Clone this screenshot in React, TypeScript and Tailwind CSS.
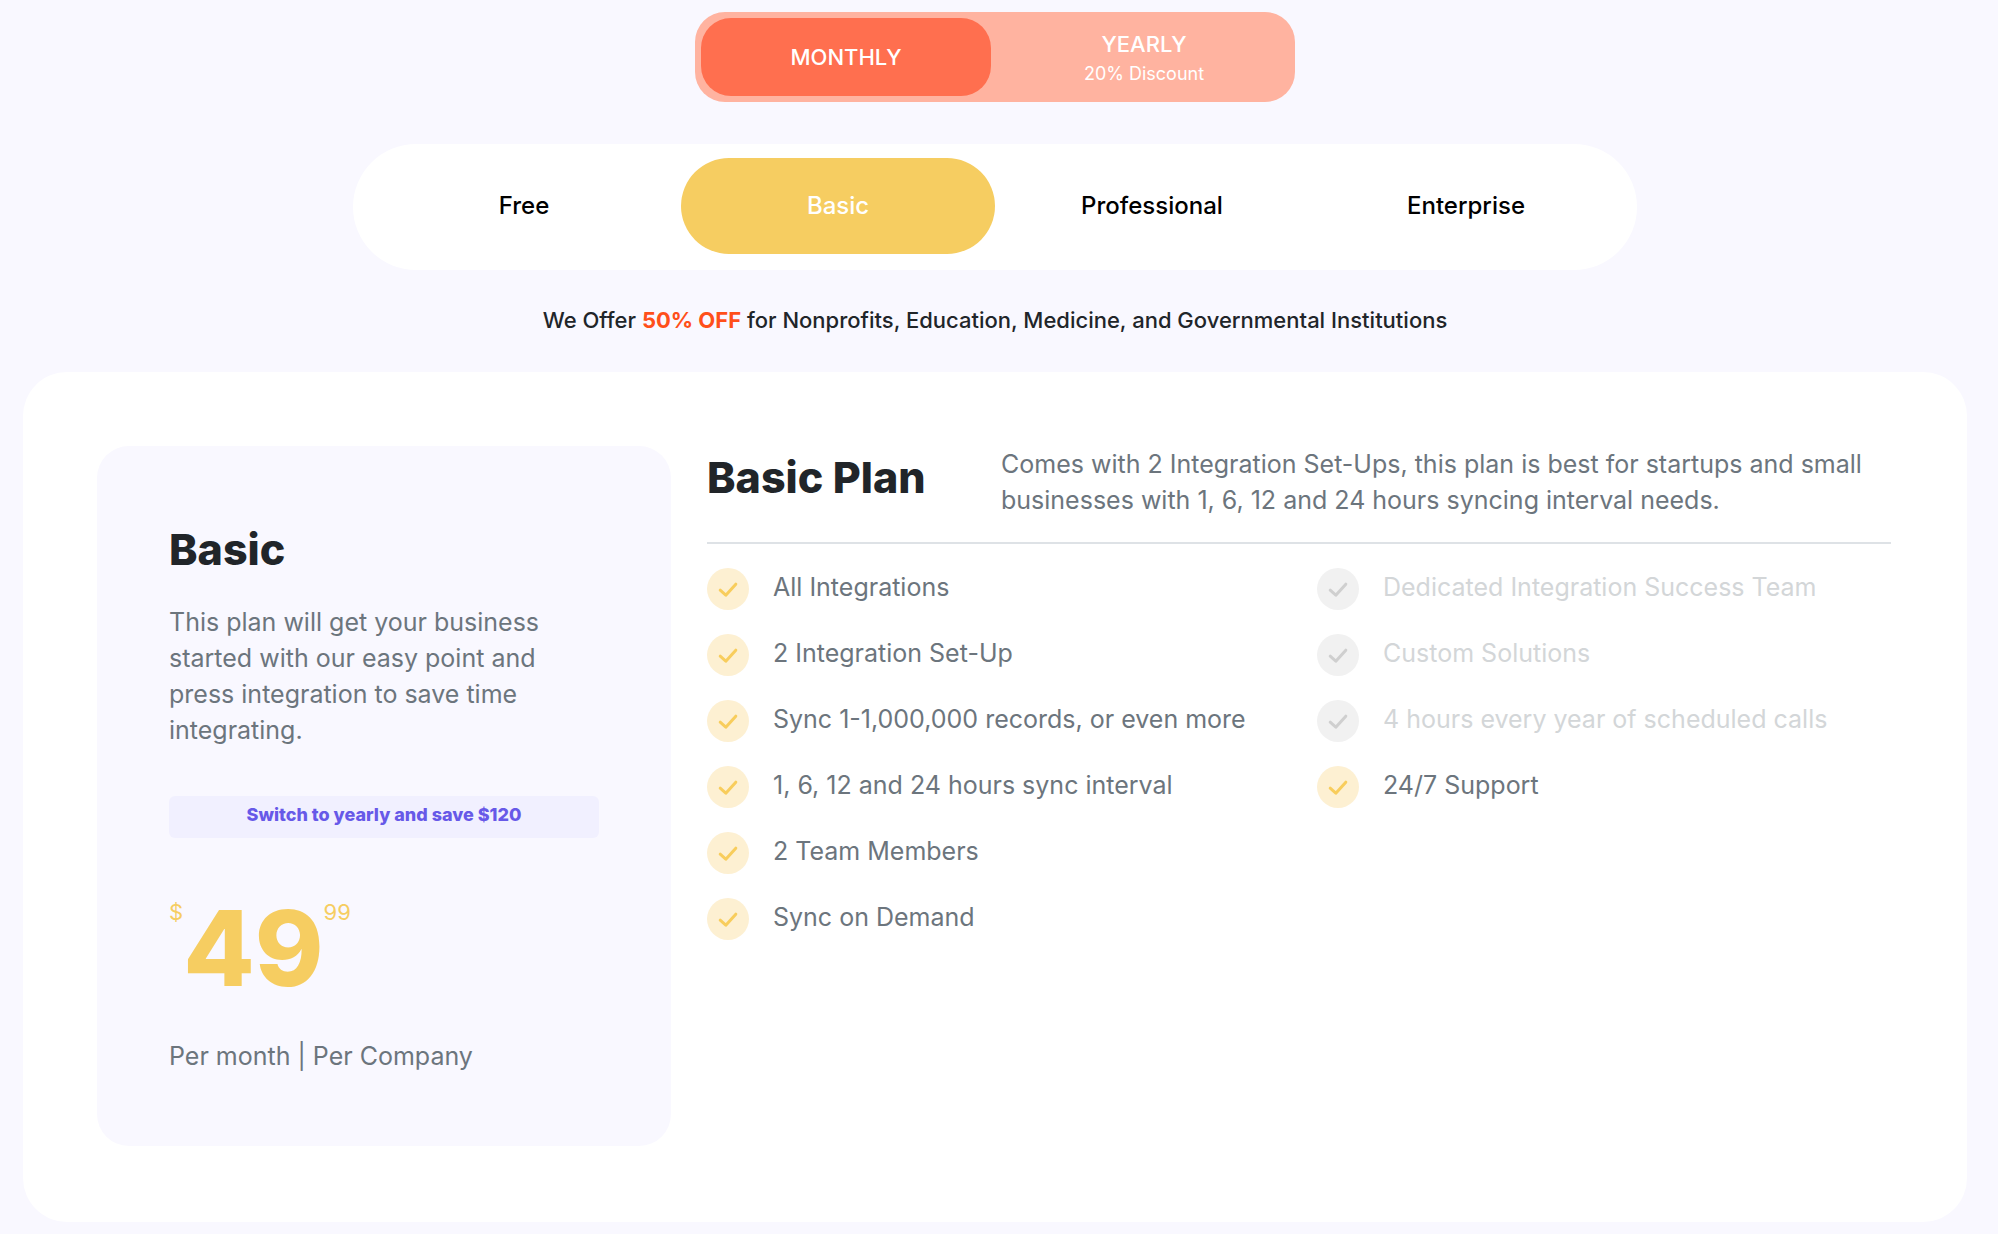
import { useState } from "react";
import clsx from "clsx";

type Cycle = "monthly" | "yearly";

type Feature = {
  label: string;
  included: boolean;
};

const PLANS = ["Free", "Basic", "Professional", "Enterprise"];

const MAIN_FEATURES: Feature[] = [
  { label: "All Integrations", included: true },
  { label: "2 Integration Set-Up", included: true },
  { label: "Sync 1-1,000,000 records, or even more", included: true },
  { label: "1, 6, 12 and 24 hours sync interval", included: true },
  { label: "2 Team Members", included: true },
  { label: "Sync on Demand", included: true },
];

const EXTRA_FEATURES: Feature[] = [
  { label: "Dedicated Integration Success Team", included: false },
  { label: "Custom Solutions", included: false },
  { label: "4 hours every year of scheduled calls", included: false },
  { label: "24/7 Support", included: true },
];

function CheckIcon({ included }: { included: boolean }) {
  return (
    <svg
      viewBox="0 0 42 42"
      fill="none"
      aria-hidden="true"
      className={clsx("size-[42px] shrink-0", included ? "text-[#f8cd5c]" : "text-[#cfcfcf]")}
    >
      <circle cx="21" cy="21" r="21" className={included ? "fill-[#fdf0d2]" : "fill-[#f1f1f1]"} />
      <path
        d="M13.2 22.2 18.8 27.2 28.8 16.2"
        stroke="currentColor"
        strokeWidth="3"
        strokeLinecap="round"
        strokeLinejoin="round"
      />
    </svg>
  );
}

function FeatureList({ items }: { items: Feature[] }) {
  return (
    <ul className="flex flex-col gap-6">
      {items.map((f) => (
        <li key={f.label} className="flex items-start gap-6">
          <CheckIcon included={f.included} />
          <span className={clsx("text-[25px]/[39px]", f.included ? "text-[#6c757d]" : "text-[#d3d6d8]")}>
            {f.label}
          </span>
        </li>
      ))}
    </ul>
  );
}

export default function App() {
  const [cycle, setCycle] = useState<Cycle>("monthly");
  const [plan, setPlan] = useState("Basic");

  return (
    <div className="min-h-screen bg-[#f9f8ff] pt-3 pr-[31px] pb-3 pl-[23px] font-[Inter,sans-serif] text-[#212529]">
      {/* Billing cycle */}
      <div className="mx-auto flex h-[90px] max-w-[600px] rounded-[30px] bg-[#ffb3a0] p-1.5 text-[22px]/8 font-medium text-white">
        <button
          type="button"
          onClick={() => setCycle("monthly")}
          className={clsx("w-[290px] rounded-[30px]", cycle === "monthly" && "bg-[#ff6f4f]")}
        >
          MONTHLY
        </button>
        <button
          type="button"
          onClick={() => setCycle("yearly")}
          className={clsx(
            "flex flex-1 flex-col items-center justify-center rounded-[30px] pt-0.5 pl-2",
            cycle === "yearly" && "bg-[#ff6f4f]",
          )}
        >
          <span>YEARLY</span>
          <span className="text-lg/7 font-normal">20% Discount</span>
        </button>
      </div>

      {/* Plans */}
      <div className="mx-auto mt-[42px] grid max-w-[1284px] grid-cols-4 rounded-full bg-white px-3.5 pt-3.5 pb-4">
        {PLANS.map((name) => (
          <button
            key={name}
            type="button"
            onClick={() => setPlan(name)}
            className={clsx(
              "h-24 rounded-full text-2xl font-medium",
              plan === name ? "bg-[#f6cd61] text-white" : "text-black",
            )}
          >
            {name}
          </button>
        ))}
      </div>

      <p className="mt-8 text-center text-[22px]/9 font-medium">
        We Offer <strong className="font-bold text-[#ff4f1a]">50% OFF</strong> for Nonprofits, Education,
        Medicine, and Governmental Institutions
      </p>

      {/* Selected plan */}
      <main className="mt-[34px] grid grid-cols-3 gap-9 rounded-[44px] bg-white pt-[74px] pr-[76px] pb-[76px] pl-[74px]">
        <section className="rounded-[32px] bg-[#f9f8ff] p-[72px]">
          <h2 className="text-[43px]/[62px] font-extrabold">Basic</h2>
          <p className="mt-6 text-[25px]/9 text-[#6c757d]">
            This plan will get your business started with our easy point and press integration to save time
            integrating.
          </p>
          <button
            type="button"
            onClick={() => setCycle("yearly")}
            className="mt-12 h-[42px] w-full rounded-md bg-[#f1f0ff] pb-1 text-lg font-extrabold text-[#6759e8]"
          >
            Switch to yearly and save $120
          </button>
          <div className="mt-[58px] flex items-start text-[#f6cd61]">
            <span className="text-[22px]/8">$</span>
            <span className="text-[104px]/[104px] font-extrabold">49</span>
            <span className="text-[22px]/8">99</span>
          </div>
          <p className="mt-[38px] text-[25px]/9 text-[#6c757d]">Per month | Per Company</p>
        </section>

        <section className="col-span-2">
          <div className="grid grid-cols-[294px_1fr] border-b-2 border-[#dee2e6] pb-6">
            <h1 className="text-[43px]/[62px] font-extrabold">Basic Plan</h1>
            <p className="text-[25px]/9 text-[#6c757d]">
              Comes with 2 Integration Set-Ups, this plan is best for startups and small businesses with 1, 6,
              12 and 24 hours syncing interval needs.
            </p>
          </div>
          <div className="mt-6 grid grid-cols-2 gap-9">
            <FeatureList items={MAIN_FEATURES} />
            <FeatureList items={EXTRA_FEATURES} />
          </div>
        </section>
      </main>
    </div>
  );
}
